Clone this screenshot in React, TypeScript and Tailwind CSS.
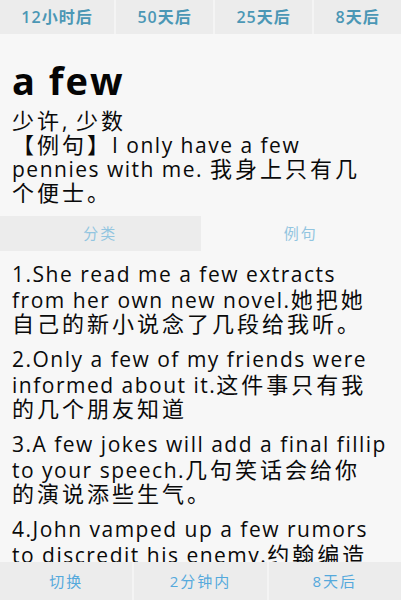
import React from "react";

const CJK = /([\u2E80-\u9FFF\u3000-\u303F\uFF00-\uFFEF]+)/;

function Line({ text }: { text: string }) {
  const all = text.split(CJK);
  return (
    <div className="flex h-[24px] items-baseline whitespace-pre">
      {all.map((p, i) =>
        p === "" ? null : i % 2 === 1 ? (
          <span key={i} className="text-[22px] tracking-[3px]">
            {p}
          </span>
        ) : (
          <span key={i}>{p}</span>
        )
      )}
    </div>
  );
}

const defLines = ["少许, 少数", "【例句】I only have a few", "pennies with me. 我身上只有几", "个便士。"];

const items: string[][] = [
  ["1.She read me a few extracts", "from her own new novel.她把她", "自己的新小说念了几段给我听。"],
  ["2.Only a few of my friends were", "informed about it.这件事只有我", "的几个朋友知道"],
  ["3.A few jokes will add a final fillip", "to your speech.几句笑话会给你", "的演说添些生气。"],
  ["4.John vamped up a few rumors", "to discredit his enemy.约翰编造"],
];

const topBtns = ["12小时后", "50天后", "25天后", "8天后"];
const bottomBtns = ["切换", "2分钟内", "8天后"];

export default function App() {
  return (
    <div className="relative w-[401px] h-[600px] overflow-hidden bg-[#f7f7f7] text-[#0a0a0a] font-['Open_Sans','Noto_Sans_CJK_SC',sans-serif]">
      {/* top bar */}
      <div className="flex h-[34px] bg-[#ececec]">
        {topBtns.map((b, i) => (
          <React.Fragment key={b}>
            {i > 0 && <div className="w-[2px] bg-[#f4f4f4]" />}
            <div className="flex flex-auto items-center justify-center text-[16px] font-semibold tracking-[1px] text-[#4b97b5]">
              {b}
            </div>
          </React.Fragment>
        ))}
      </div>

      {/* word */}
      <div className="px-3">
        <div className="mt-[24px] text-[38px] leading-[44px] font-bold tracking-[2px] text-[#050505]">a few</div>
        <div className="mt-[2px] text-[21px] tracking-[1.5px]">
          {defLines.map((l) => (
            <Line key={l} text={l} />
          ))}
        </div>
      </div>

      {/* tabs */}
      <div className="mt-[16px] flex h-[35px]">
        <div className="flex flex-1 items-center justify-center bg-[#ececec] text-[15px] tracking-[2px] text-[#92c5e0]">
          分类
        </div>
        <div className="flex flex-1 items-center justify-center text-[15px] tracking-[2px] text-[#92c5e0]">
          例句
        </div>
      </div>

      {/* examples */}
      <div className="mt-[8px] flex flex-col gap-[13px] px-3 text-[21px] tracking-[1.5px]">
        {items.map((it, i) => (
          <div key={i}>
            {it.map((l) => (
              <Line key={l} text={l} />
            ))}
          </div>
        ))}
      </div>

      {/* bottom bar */}
      <div className="absolute bottom-0 left-0 right-0 flex h-[38px] bg-[#ececec]">
        {bottomBtns.map((b, i) => (
          <React.Fragment key={b}>
            {i > 0 && <div className="w-[2px] bg-[#f4f4f4]" />}
            <div className="flex flex-1 items-center justify-center text-[15px] tracking-[2px] text-[#55a9dc]">
              {b}
            </div>
          </React.Fragment>
        ))}
      </div>
    </div>
  );
}
